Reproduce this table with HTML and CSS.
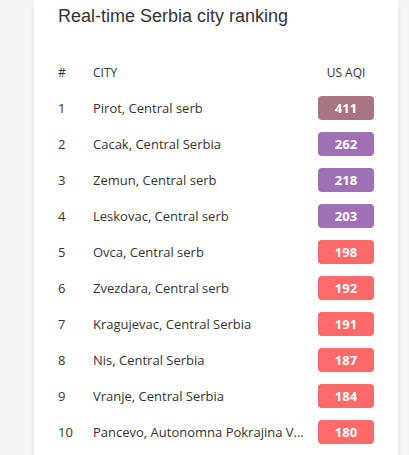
FILE: index.html
```html
<!DOCTYPE html>
<html lang="en">
<head>
    <meta charset="UTF-8">
    <meta name="viewport" content="width=device-width, initial-scale=1.0">
    <title>Real-time Serbia city ranking</title>
    <link rel="stylesheet" href="styles.css">
</head>
<body>
    <div class="card">
        <h2>Real-time Serbia city ranking</h2>
        <table class="ranking">
            <thead>
                <tr>
                    <th class="rank">#</th>
                    <th class="city">City</th>
                    <th class="aqi">US AQI</th>
                </tr>
            </thead>
            <tbody>
                <tr><td class="rank">1</td><td class="city">Pirot, Central serb</td><td class="aqi"><span class="badge hazardous">411</span></td></tr>
                <tr><td class="rank">2</td><td class="city">Cacak, Central Serbia</td><td class="aqi"><span class="badge very-unhealthy">262</span></td></tr>
                <tr><td class="rank">3</td><td class="city">Zemun, Central serb</td><td class="aqi"><span class="badge very-unhealthy">218</span></td></tr>
                <tr><td class="rank">4</td><td class="city">Leskovac, Central serb</td><td class="aqi"><span class="badge very-unhealthy">203</span></td></tr>
                <tr><td class="rank">5</td><td class="city">Ovca, Central serb</td><td class="aqi"><span class="badge unhealthy">198</span></td></tr>
                <tr><td class="rank">6</td><td class="city">Zvezdara, Central serb</td><td class="aqi"><span class="badge unhealthy">192</span></td></tr>
                <tr><td class="rank">7</td><td class="city">Kragujevac, Central Serbia</td><td class="aqi"><span class="badge unhealthy">191</span></td></tr>
                <tr><td class="rank">8</td><td class="city">Nis, Central Serbia</td><td class="aqi"><span class="badge unhealthy">187</span></td></tr>
                <tr><td class="rank">9</td><td class="city">Vranje, Central Serbia</td><td class="aqi"><span class="badge unhealthy">184</span></td></tr>
                <tr><td class="rank">10</td><td class="city">Pancevo, Autonomna Pokrajina V...</td><td class="aqi"><span class="badge unhealthy">180</span></td></tr>
            </tbody>
        </table>
    </div>
</body>
</html>
```

FILE: styles.css
```css
body {
    margin: 0;
    padding: 0 11px 0 34px;
    background-color: #f4f4f4;
    font-family: "Open Sans", sans-serif;
    color: #333;
}

.card {
    background: #fff;
    padding: 0 24px 20px 24px;
    box-shadow: 0 0 6px rgba(0,0,0,0.04);
}

h2 {
    margin: 0;
    padding-top: 5px;
    font-family: "Liberation Sans", Arial, sans-serif;
    font-size: 18px;
    font-weight: normal;
    line-height: 22px;
    color: #333;
}

.ranking {
    width: 100%;
    border-collapse: collapse;
    margin-top: 27px;
    table-layout: fixed;
}

.ranking th,
.ranking td {
    padding: 0;
    height: 36px;
    text-align: left;
    vertical-align: middle;
}

.ranking th {
    font-size: 12px;
    font-weight: normal;
    text-transform: uppercase;
}

.ranking td {
    font-size: 13px;
}

.ranking td.city {
    white-space: nowrap;
}

.rank {
    width: 35px;
}

.ranking th.aqi,
.ranking td.aqi {
    width: 56px;
    text-align: center;
}

.badge {
    display: block;
    height: 24px;
    line-height: 24px;
    border-radius: 4px;
    color: #fff;
    font-weight: bold;
    font-size: 13px;
    text-align: center;
}

.hazardous {
    background-color: #a87383;
}

.very-unhealthy {
    background-color: #a070b6;
}

.unhealthy {
    background-color: #fe6a69;
}
```
